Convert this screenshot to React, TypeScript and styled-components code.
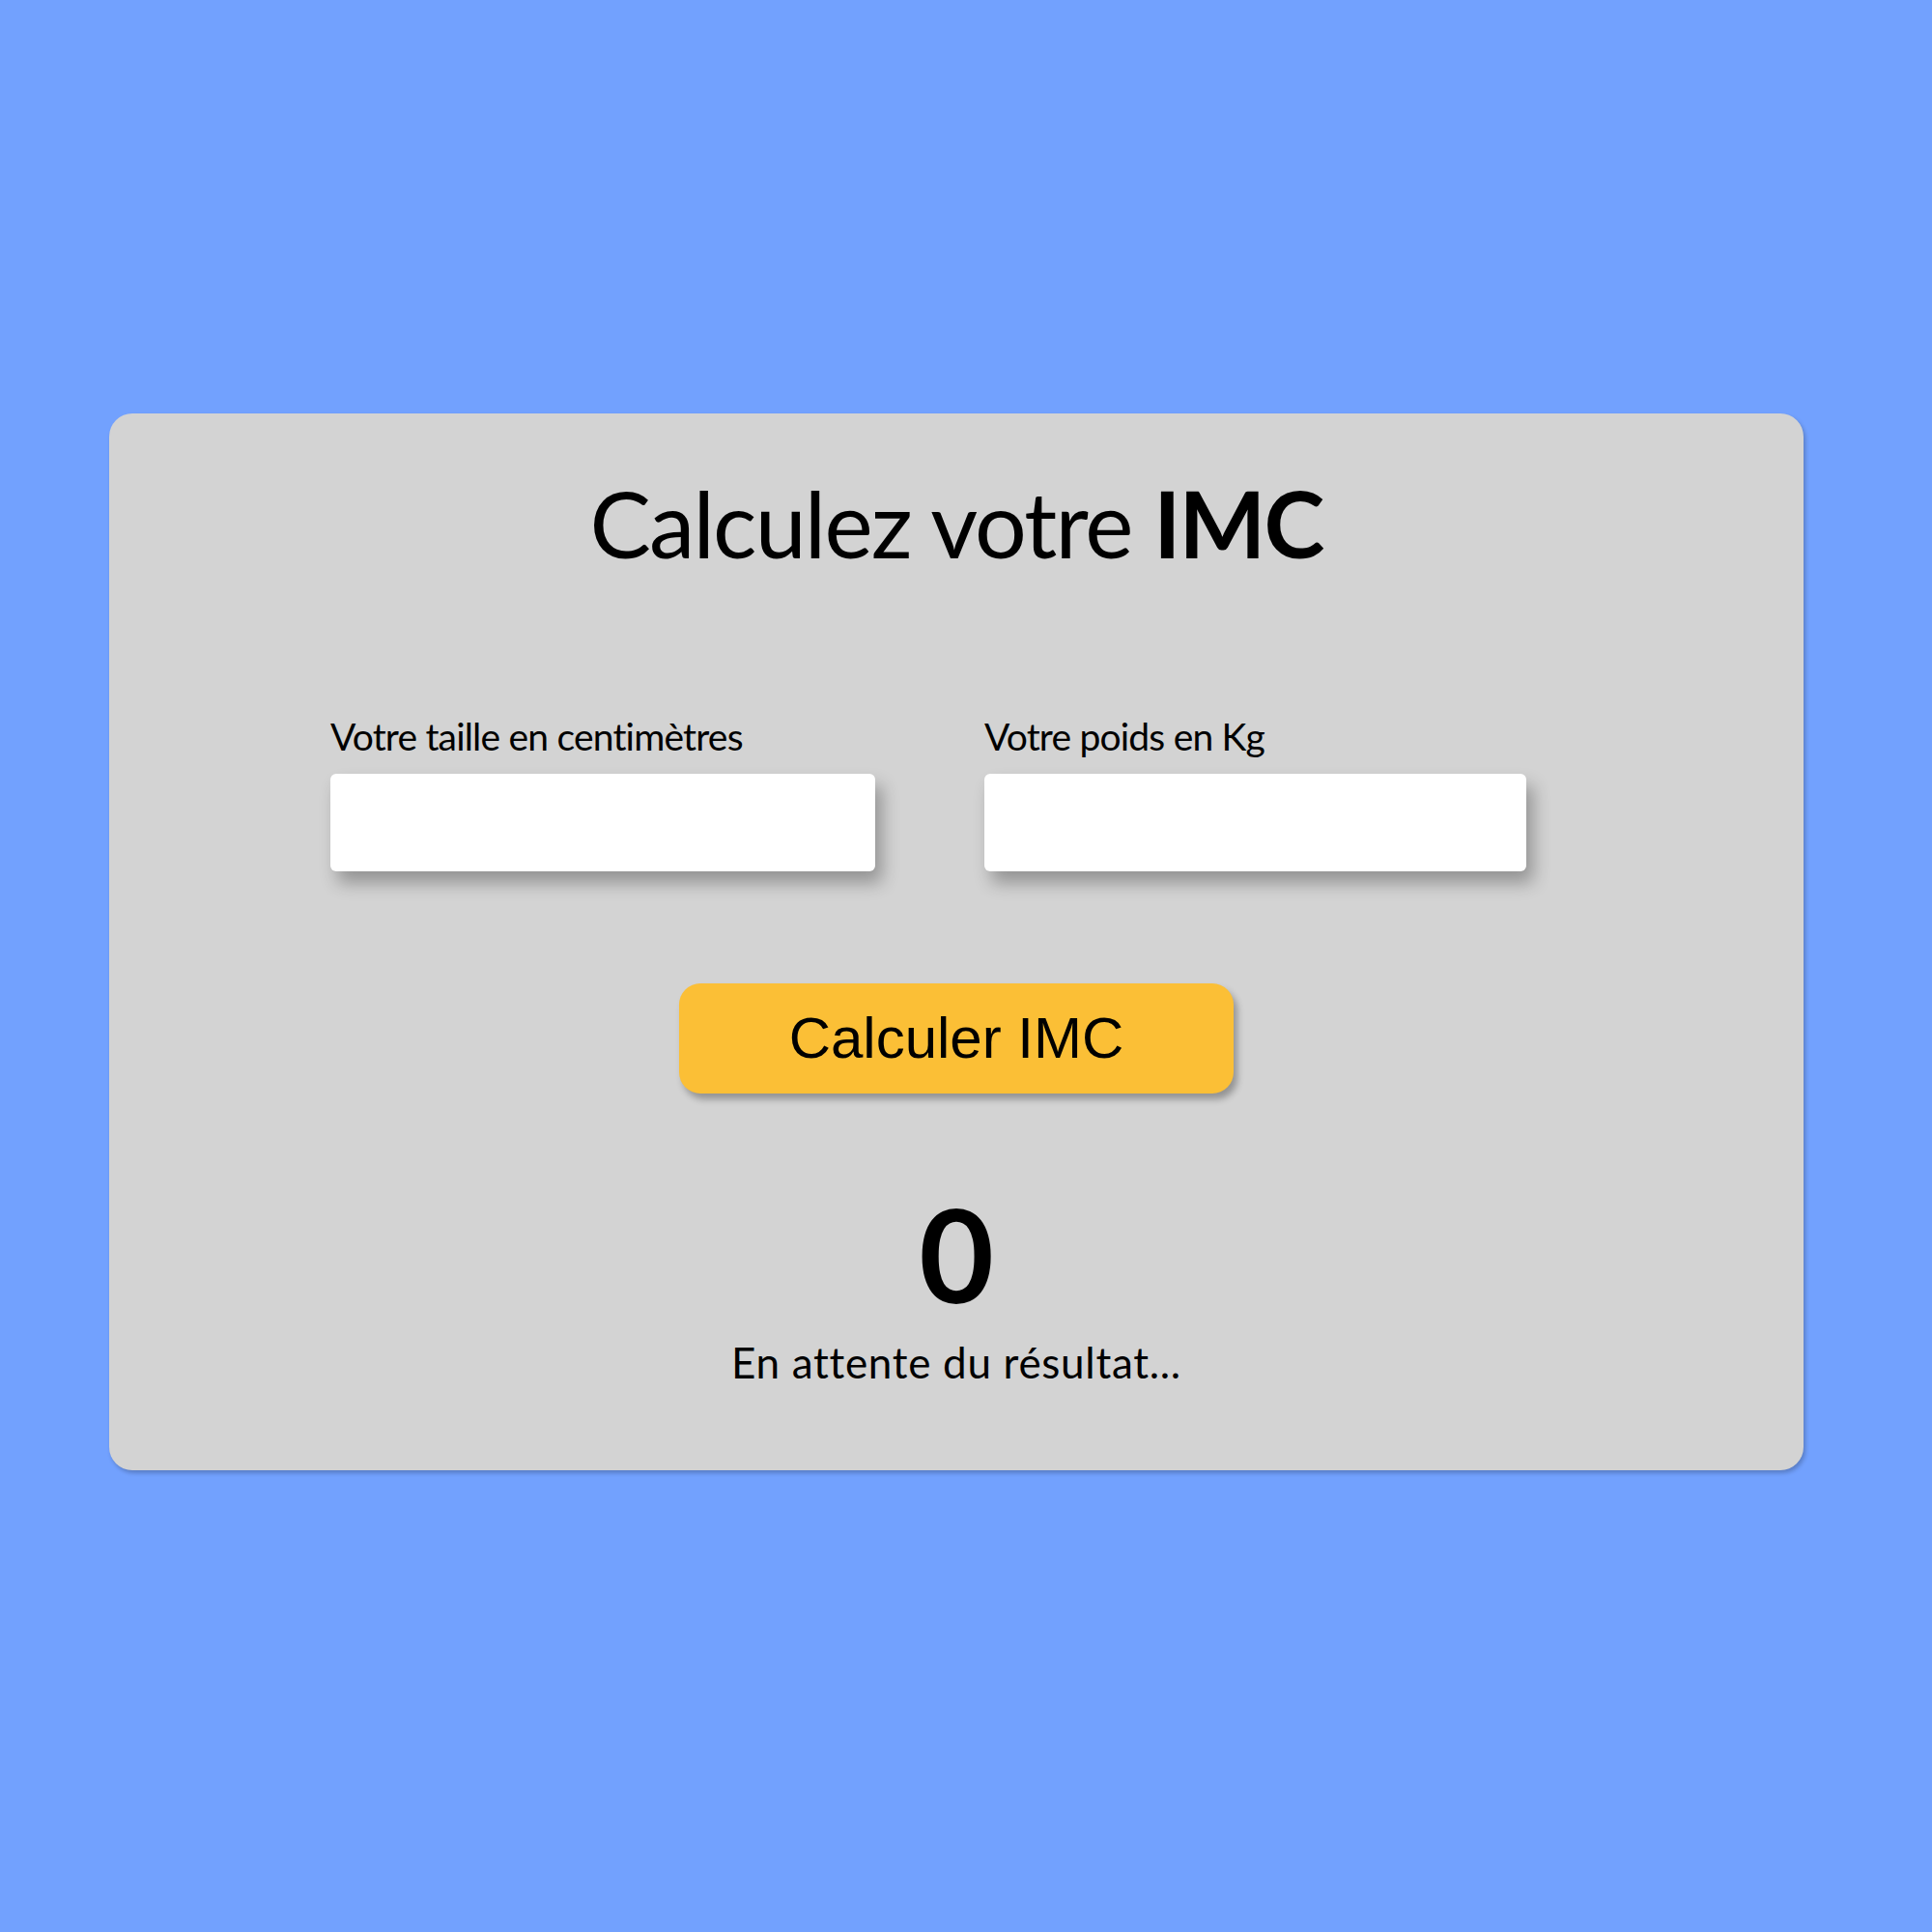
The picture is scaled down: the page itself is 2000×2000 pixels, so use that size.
import React from "react";
import styled, { createGlobalStyle } from "styled-components";

const GlobalStyle = createGlobalStyle`
  html, body {
    margin: 0;
    padding: 0;
    background: #72a1fe;
  }
  * { box-sizing: border-box; }
`;

const Page = styled.div`
  min-height: 2000px;
  background: #72a1fe;
  padding: 428px 133px 0 113px;
  font-family: Lato, "Open Sans", sans-serif;
  color: #000;
`;

const Card = styled.section`
  background: #d3d3d3;
  border-radius: 24px;
  box-shadow: 2px 3px 4px rgba(0, 0, 0, 0.22);
  padding: 56px 0 86px;
  display: flex;
  flex-direction: column;
  align-items: center;
`;

const Title = styled.h1`
  margin: 0;
  font-family: Lato, sans-serif;
  font-weight: 400;
  font-size: 95px;
  line-height: 1.2;
  letter-spacing: -1.8px;
  text-align: center;

  strong {
    font-weight: 700;
  }
`;

const Fields = styled.div`
  margin-top: 141px;
  align-self: stretch;
  display: flex;
  justify-content: center;
  gap: 113px;
  padding-right: 58px;
`;

const Field = styled.label`
  display: flex;
  flex-direction: column;
  gap: 15px;
`;

const LabelText = styled.span`
  font-family: Lato, sans-serif;
  font-size: 39px;
  line-height: 1.2;
  letter-spacing: -0.8px;
`;

const Input = styled.input<{ $w: number }>`
  width: ${(p) => p.$w}px;
  height: 101px;
  border: none;
  border-radius: 6px;
  background: #fff;
  box-shadow: 7px 12px 18px rgba(0, 0, 0, 0.3);
  outline: none;
  font-size: 36px;
  padding: 0 16px;
`;

const Button = styled.button`
  margin-top: 116px;
  width: 574px;
  height: 114px;
  border: none;
  border-radius: 22px;
  background: #fbbf36;
  box-shadow: 4px 6px 7px rgba(0, 0, 0, 0.3);
  font-family: "Liberation Sans", Arial, sans-serif;
  font-size: 60px;
  color: #000;
  cursor: pointer;
`;

const Result = styled.div`
  margin-top: 86px;
  font-family: Lato, sans-serif;
  font-weight: 700;
  font-size: 134px;
  line-height: 1.2;
`;

const Status = styled.p`
  margin: 5px 0 0;
  font-family: Lato, sans-serif;
  font-size: 44px;
  line-height: 1.2;
  letter-spacing: 0.7px;
`;

export default function App() {
  return (
    <>
      <GlobalStyle />
      <Page>
        <Card>
          <Title>
            Calculez votre <strong>IMC</strong>
          </Title>
          <Fields>
            <Field>
              <LabelText>Votre taille en centimètres</LabelText>
              <Input type="text" $w={564} />
            </Field>
            <Field>
              <LabelText>Votre poids en Kg</LabelText>
              <Input type="text" $w={561} />
            </Field>
          </Fields>
          <Button type="button">Calculer IMC</Button>
          <Result>0</Result>
          <Status>En attente du résultat...</Status>
        </Card>
      </Page>
    </>
  );
}
